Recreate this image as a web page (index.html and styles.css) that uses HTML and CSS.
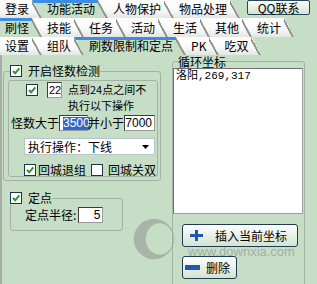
FILE: index.html
```html
<!DOCTYPE html>
<html lang="zh-CN">
<head>
    <meta charset="UTF-8">
    <title>刷数限制和定点</title>
    <link rel="stylesheet" href="styles.css">
</head>
<body>
    <div class="window">
        <div class="tabrow">
            <span class="tab">登录</span>
            <span class="tab on">功能活动</span>
            <span class="tab">人物保护</span>
            <span class="tab">物品处理</span>
            <button class="qq">QQ联系</button>
        </div>
        <div class="tabrow tabrow-mid">
            <span class="tab on">刷怪</span>
            <span class="tab">技能</span>
            <span class="tab">任务</span>
            <span class="tab">活动</span>
            <span class="tab">生活</span>
            <span class="tab">其他</span>
            <span class="tab">统计</span>
        </div>
        <div class="tabrow">
            <span class="tab">设置</span>
            <span class="tab">组队</span>
            <span class="tab on">刷数限制和定点</span>
            <span class="tab">PK</span>
            <span class="tab">吃双</span>
        </div>

        <div class="panel">
            <div class="col-left">
                <fieldset class="group group-count">
                    <legend class="check-legend">
                        <span class="cb"><svg viewBox="0 0 10 10"><path d="M2 5 L4.2 7.3 L8.3 2.4"/></svg></span>
                        <span>开启怪数检测</span>
                    </legend>
                    <div class="subgroup">
                        <div class="row time-row">
                            <span class="cb"><svg viewBox="0 0 10 10"><path d="M2 5 L4.2 7.3 L8.3 2.4"/></svg></span>
                            <span class="field field-hour">22</span>
                            <span class="note"><span>点到24点之间不</span><span>执行以下操作</span></span>
                        </div>
                        <div class="row count-row">
                            <span class="label-count">怪数大于</span>
                            <span class="field field-min"><span class="sel">3500</span></span>
                            <span>并小于</span>
                            <span class="field field-max">7000</span>
                        </div>
                        <div class="combo">
                            <span>执行操作：下线</span>
                            <svg class="arrow" viewBox="0 0 7 4"><path d="M0 0 H7 L3.5 4 Z"/></svg>
                        </div>
                        <div class="row checks">
                            <label class="check">
                                <span class="cb"><svg viewBox="0 0 10 10"><path d="M2 5 L4.2 7.3 L8.3 2.4"/></svg></span>
                                回城退组
                            </label>
                            <label class="check check-second">
                                <span class="cb"></span>
                                回城关双
                            </label>
                        </div>
                    </div>
                </fieldset>

                <fieldset class="group group-point">
                    <legend class="check-legend">
                        <span class="cb"><svg viewBox="0 0 10 10"><path d="M2 5 L4.2 7.3 L8.3 2.4"/></svg></span>
                        <span>定点</span>
                    </legend>
                    <div class="row radius-row">
                        <span>定点半径:</span>
                        <span class="field field-radius">5</span>
                    </div>
                </fieldset>
            </div>

            <fieldset class="group group-loop">
                <legend>循环坐标</legend>
                <div class="listbox">洛阳,269,317</div>
                <button class="btn btn-insert">
                    <svg viewBox="0 0 13 11"><path d="M0 4 H5 V0 H8 V4 H13 V7 H8 V11 H5 V7 H0 Z"/></svg>
                    插入当前坐标
                </button>
                <button class="btn btn-delete">
                    <svg viewBox="0 0 15 5"><path d="M0 0 H15 V5 H0 Z"/></svg>
                    删除
                </button>
            </fieldset>
        </div>

        <!-- watermark over the screenshot -->
        <svg class="wm-logo" viewBox="0 0 50 50"><path fill-rule="evenodd" d="M25 3 A22 22 0 1 0 25 47 A22 22 0 1 0 25 3 Z M31 8 A15 17 0 1 0 31 42 A15 17 0 1 0 31 8 Z"/></svg>
        <div class="wm-text">www.downxia.com</div>
    </div>
</body>
</html>
```

FILE: styles.css
```css
* {
    box-sizing: border-box;
}

body {
    margin: 0;
    width: 317px;
    height: 284px;
    overflow: hidden;
    background-color: #c6dec6;
    font-family: "Noto Sans CJK SC", sans-serif;
    font-size: 12px;
    line-height: 14px;
    color: #000;
}

.window {
    position: relative;
    height: 284px;
}

/* tab strips */
.tabrow {
    display: flex;
    height: 18px;
}

.tabrow-mid {
    height: 19px;
}

.tab {
    display: flex;
    align-items: center;
    padding: 0 13px 0 15px;
    margin-right: -10px;
    white-space: nowrap;
    background:
        linear-gradient(to top right, transparent 38%, #8e948e 40%, #8e948e 50%, transparent 50%) right top / 10px 100% no-repeat,
        linear-gradient(#ffffff, #fafafa 55%, #e3e6e3);
    clip-path: polygon(0 0, calc(100% - 10px) 0, 100% 100%, 0 100%);
}

.tab:first-child {
    padding-left: 5px;
}

.tab:nth-child(1) { z-index: 8; }
.tab:nth-child(2) { z-index: 7; }
.tab:nth-child(3) { z-index: 6; }
.tab:nth-child(4) { z-index: 5; }
.tab:nth-child(5) { z-index: 4; }
.tab:nth-child(6) { z-index: 3; }
.tab:nth-child(7) { z-index: 2; }

.tab.on {
    background:
        linear-gradient(#3a8de0, #3a8de0) left top / calc(100% - 10px) 3px no-repeat,
        linear-gradient(to top right, transparent 38%, #8e948e 40%, #8e948e 50%, transparent 50%) right top / 10px 100% no-repeat,
        #c6dec6;
}

.qq {
    width: 63px;
    height: 15px;
    margin-left: 17px;
    padding: 0;
    border: 1px solid #274458;
    border-radius: 2px;
    background: linear-gradient(#fbfdfb, #d3e5d3);
    font-family: "Noto Sans CJK SC", sans-serif;
    font-size: 12px;
    line-height: 13px;
    color: #000;
}

/* page body */
.panel {
    display: flex;
    height: 229px;
    padding-left: 1px;
    border-left: 2px solid #a6aea6;
}

.col-left {
    width: 159px;
}

.group {
    margin: 0;
    border: 1px solid #a3b3a3;
    border-radius: 3px;
}

.check-legend {
    display: flex;
    align-items: center;
    gap: 6px;
    padding: 0;
    height: 14px;
}

.cb {
    display: inline-flex;
    width: 12px;
    height: 12px;
    border: 1px solid #1f3446;
    background-color: #fff;
    flex-shrink: 0;
}

.cb svg {
    width: 10px;
    height: 10px;
    fill: none;
    stroke: #239a2c;
    stroke-width: 2;
}

.field {
    display: inline-flex;
    align-items: center;
    height: 16px;
    padding: 0 2px;
    background-color: #fff;
    border: 1px solid;
    border-color: #3c3c3c #9a9a9a #9a9a9a #3c3c3c;
    font-family: "Liberation Sans", sans-serif;
    font-size: 12px;
}

.group-count {
    width: 158px;
    margin-top: 9px;
    padding: 2px 2px 3px 4px;
}

.group-count .check-legend {
    margin-left: 2px;
}

.subgroup {
    width: 150px;
    height: 97px;
    padding: 1px 0 0 0;
    border: 1px solid #a3b3a3;
    border-radius: 3px;
}

.row {
    display: flex;
    align-items: center;
}

.time-row {
    align-items: flex-start;
    margin-left: 17px;
}

.time-row .cb {
    margin-top: 2px;
}

.field-hour {
    width: 15px;
    margin-left: 9px;
    padding: 0 0 0 1px;
    font-size: 11px;
}

.note {
    display: flex;
    flex-direction: column;
    margin: -1px 0 0 6px;
    font-size: 11px;
    line-height: 16px;
}

.count-row {
    margin-top: 2px;
    margin-left: 2px;
}

.field-min {
    width: 29px;
    padding: 0 1px 0 3px;
}

.sel {
    background-color: #3169c6;
    color: #fff;
    line-height: 13px;
}

.field-max {
    width: 31px;
    justify-content: flex-end;
}

.combo {
    display: flex;
    align-items: center;
    justify-content: space-between;
    width: 131px;
    height: 17px;
    margin: 7px 0 0 15px;
    padding: 0 5px 0 3px;
    background-color: #fff;
    border: 1px solid #b8c4cc;
}

.arrow {
    width: 7px;
    height: 4px;
    fill: #000;
}

.checks {
    margin: 8px 0 0 15px;
}

.check {
    display: flex;
    align-items: center;
    gap: 2px;
}

.check-second {
    margin-left: 5px;
    gap: 5px;
}

.group-point {
    width: 113px;
    margin: 10px 0 0 7px;
    padding: 2px 0 7px 0;
}

.group-point .check-legend {
    margin-left: -1px;
}

.radius-row {
    margin-left: 14px;
}

.field-radius {
    width: 25px;
    margin-left: 2px;
    justify-content: flex-end;
}

/* loop coordinates */
.group-loop {
    width: 133px;
    height: 240px;
    margin-left: 10px;
    padding: 0;
}

.group-loop legend {
    margin-left: 5px;
    padding: 0;
    line-height: 13px;
}

.listbox {
    width: 130px;
    height: 146px;
    padding: 1px 2px;
    background-color: #fff;
    border: 1px solid;
    border-color: #6f6f6f #a0a0a0 #a0a0a0 #6f6f6f;
    font-family: "Liberation Mono", "Noto Sans CJK SC", monospace;
    font-size: 11px;
    line-height: 13px;
}

.btn {
    display: flex;
    align-items: center;
    height: 23px;
    margin: 10px 0 0 9px;
    border: 1px solid #1f3c52;
    border-radius: 3px;
    background: linear-gradient(#fdfefd, #e8f1e8 50%, #d2e4d2);
    font-family: "Noto Sans CJK SC", sans-serif;
    font-size: 12px;
    color: #000;
}

.btn svg {
    fill: #2356b4;
}

.btn-insert {
    width: 116px;
    padding: 0 0 0 7px;
}

.btn-insert svg {
    width: 13px;
    height: 11px;
    margin-right: 12px;
}

.btn-delete {
    width: 55px;
    margin-top: 9px;
    padding: 0 0 0 2px;
}

.btn-delete svg {
    width: 15px;
    height: 5px;
    margin-right: 6px;
}

.wm-logo {
    position: absolute;
    left: 131px;
    top: 215px;
    width: 46px;
    height: 48px;
    fill: #9ea79e;
    opacity: 0.75;
}

.wm-text {
    position: absolute;
    left: 188px;
    top: 246px;
    font-family: "Liberation Sans", sans-serif;
    font-size: 13px;
    line-height: 11px;
    color: #a3afa3;
}
```
